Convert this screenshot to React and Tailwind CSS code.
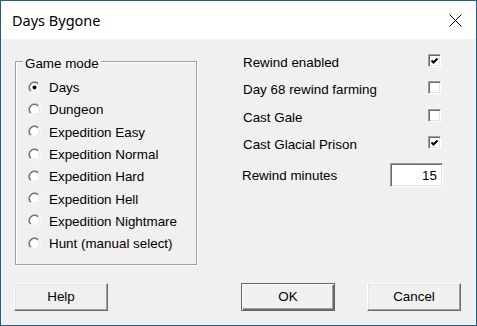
import React, { useState } from 'react';

const MODES = [
  'Days',
  'Dungeon',
  'Expedition Easy',
  'Expedition Normal',
  'Expedition Hard',
  'Expedition Hell',
  'Expedition Nightmare',
  'Hunt (manual select)',
];

// classic sunken radio button
function Radio({ checked }) {
  return (
    <svg width="13" height="13" viewBox="0 0 13 13" className="shrink-0">
      <circle cx="6.5" cy="6.5" r="5.5" fill="#fff" />
      <path d="M2.26 10.74 A6 6 0 0 1 10.74 2.26" fill="none" stroke="#a0a0a0" />
      <path d="M10.74 2.26 A6 6 0 0 1 2.26 10.74" fill="none" stroke="#ffffff" />
      <path d="M2.96 10.04 A5 5 0 0 1 10.04 2.96" fill="none" stroke="#505050" />
      <path d="M10.04 2.96 A5 5 0 0 1 2.96 10.04" fill="none" stroke="#e3e3e3" />
      {checked && <circle cx="6.5" cy="6.5" r="2" fill="#000" />}
    </svg>
  );
}

function Checkbox({ checked }) {
  return (
    <div className="relative w-[13px] h-[13px] shrink-0 bg-white border border-t-[#a0a0a0] border-l-[#a0a0a0] border-r-white border-b-white shadow-[inset_1px_1px_0_#696969,inset_-1px_-1px_0_#e3e3e3]">
      {checked && (
        <svg width="13" height="13" viewBox="0 0 13 13" className="absolute -left-px -top-px">
          <path d="M3.5 6.5 L5.5 8.5 L9.5 4.5" fill="none" stroke="#000" strokeWidth="2" />
        </svg>
      )}
    </div>
  );
}

function Button({ children, isDefault }) {
  return (
    <button
      className={
        'w-[94px] h-[28px] bg-[#f0f0f0] text-black ' +
        (isDefault
          ? 'border border-[#646464] shadow-[inset_1px_1px_0_#fff,inset_-1px_-1px_0_#696969,inset_-2px_-2px_0_#a0a0a0]'
          : 'border border-t-white border-l-white border-r-[#696969] border-b-[#696969] shadow-[inset_-1px_-1px_0_#a0a0a0,inset_1px_1px_0_#e3e3e3]')
      }
    >
      {children}
    </button>
  );
}

export default function App() {
  const [mode] = useState('Days');
  const options = [
    ['Rewind enabled', true],
    ['Day 68 rewind farming', false],
    ['Cast Gale', false],
    ['Cast Glacial Prison', true],
  ];

  return (
    <div className="w-[477px] h-[326px] flex flex-col border border-[#1f5f86] bg-[#f0f0f0] text-black font-['Liberation_Sans',Arial,sans-serif] text-[13.4px]">
      {/* Title bar */}
      <div className="h-[38px] bg-white flex items-center justify-between pl-[11px] pr-[14px]">
        <span className="font-['Noto_Sans',sans-serif] text-[14.5px] mt-[1px]">Days Bygone</span>
        <svg width="13" height="13" viewBox="0 0 13 13">
          <path d="M0.5 0.5 L12.5 12.5 M12.5 0.5 L0.5 12.5" stroke="#000" strokeWidth="1" />
        </svg>
      </div>

      {/* Body */}
      <div className="flex-1 flex flex-col">
        <div className="flex items-start h-[226px]">
          <fieldset className="ml-[14px] mt-[14px] h-[212px] w-[182px] p-0 border border-[#a0a0a0] shadow-[inset_1px_1px_0_#fff,1px_1px_0_#fff]">
            <legend className="ml-[7px] px-[2px] leading-[16px]">
              <span className="relative top-[3px]">Game mode</span>
            </legend>
            <div className="flex flex-col pl-[12px] pt-[7px]">
              {MODES.map((m) => (
                <div key={m} className="h-[22.3px] flex items-center gap-[8px]">
                  <Radio checked={m === mode} />
                  <span className="mt-[2px]">{m}</span>
                </div>
              ))}
            </div>
          </fieldset>

          <div className="ml-[45px] mt-[8px] w-[201px] flex flex-col">
            {options.map(([label, on]) => (
              <div key={label} className="h-[27.3px] flex items-center justify-between pl-[1px] pr-[2px]">
                <span className="mt-[5px]">{label}</span>
                <Checkbox checked={on} />
              </div>
            ))}
            <div className="mt-[7px] h-[24px] flex items-center justify-between">
              <span className="mt-[2px]">Rewind minutes</span>
              <div className="w-[53px] h-[24px] bg-white border border-t-[#a0a0a0] border-l-[#a0a0a0] border-r-white border-b-white shadow-[inset_1px_1px_0_#696969,inset_-1px_-1px_0_#e3e3e3] flex items-center justify-end pr-[5px] pt-[2px]">
                15
              </div>
            </div>
          </div>
        </div>

        {/* Buttons */}
        <div className="flex pl-[13px] mt-[18px]">
          <Button>Help</Button>
          <div className="ml-[133px]">
            <Button isDefault>OK</Button>
          </div>
          <div className="ml-[32px]">
            <Button>Cancel</Button>
          </div>
        </div>
      </div>
    </div>
  );
}
